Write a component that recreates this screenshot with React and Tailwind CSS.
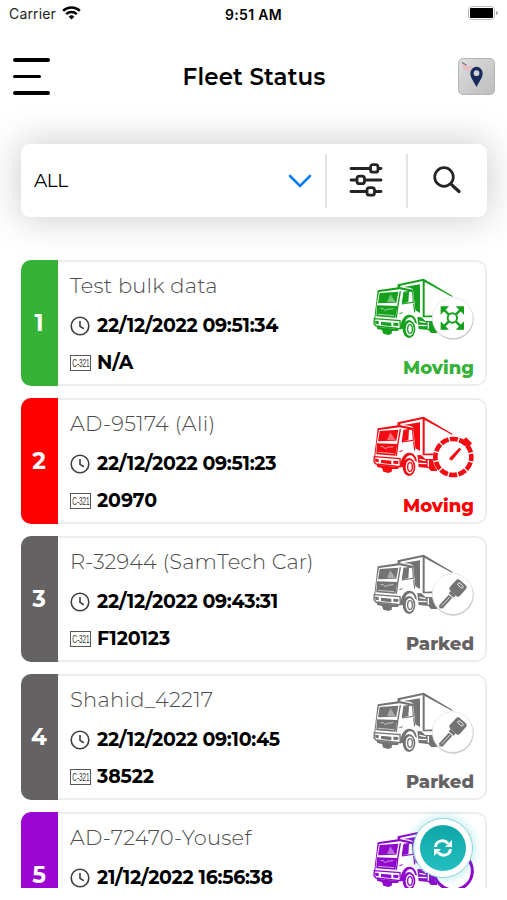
import React from "react";
import clsx from "clsx";

const vehicles = [
  {
    id: 1,
    name: "Test bulk data",
    nameClass: "tracking-[0.2px]",
    date: "22/12/2022 09:51:34",
    plate: "N/A",
    status: "Moving",
    badge: "arrows",
    bg: "bg-[#36b336]",
    text: "text-[#36b336]",
    truck: "text-[#14a01c]",
  },
  {
    id: 2,
    name: "AD-95174 (Ali)",
    nameClass: "tracking-[0.3px]",
    date: "22/12/2022 09:51:23",
    plate: "20970",
    status: "Moving",
    badge: "gauge",
    bg: "bg-[#fe0000]",
    text: "text-[#fe0000]",
    truck: "text-[#f50a12]",
  },
  {
    id: 3,
    name: "R-32944 (SamTech Car)",
    nameClass: "tracking-[0.1px]",
    date: "22/12/2022 09:43:31",
    plate: "F120123",
    status: "Parked",
    badge: "key",
    bg: "bg-[#646263]",
    text: "text-[#646263]",
    truck: "text-[#737373]",
  },
  {
    id: 4,
    name: "Shahid_42217",
    nameClass: "tracking-[0.3px]",
    date: "22/12/2022 09:10:45",
    plate: "38522",
    status: "Parked",
    badge: "key",
    bg: "bg-[#646263]",
    text: "text-[#646263]",
    truck: "text-[#737373]",
  },
  {
    id: 5,
    name: "AD-72470-Yousef",
    nameClass: "tracking-[0.25px]",
    date: "21/12/2022 16:56:38",
    badge: "ring",
    bg: "bg-[#9a05d2]",
    text: "text-[#9a05d2]",
    truck: "text-[#8f08cc]",
  },
];

const Badge = ({ type }) => {
  if (type === "gauge") {
    return (
      <g>
        <circle cx="310" cy="192" r="62" fill="#fff" />
        <circle
          cx="310"
          cy="192"
          r="54"
          fill="none"
          stroke="currentColor"
          strokeWidth="14"
          strokeDasharray="24.3 3.97"
          strokeDashoffset="12"
        />
        <path d="M333 147l15-14 18 18-12 14z" fill="currentColor" />
        <path d="M299 194l29-30 6 5-26 31c-6 4-12 0-9-6z" fill="currentColor" />
      </g>
    );
  }

  if (type === "ring") {
    return <circle cx="310" cy="192" r="57" fill="#fff" stroke="currentColor" strokeWidth="9" />;
  }

  return (
    <g>
      <circle cx="309" cy="192" r="62" fill="#c2c2c2" />
      <circle cx="308" cy="189" r="61" fill="#fff" stroke="#dedede" strokeWidth="2" />
      {type === "arrows" && (
        <g stroke="currentColor" strokeWidth="7" fill="none">
          <circle cx="307" cy="189" r="14" strokeWidth="6" />
          <path d="M296 178l-15-15M318 178l15-15M296 200l-15 15M318 200l15 15" />
          <g fill="currentColor" stroke="none">
            <path d="M272 154h25l-25 25zM342 154h-25l25 25zM272 224h25l-25-25zM342 224h-25l25-25z" />
          </g>
        </g>
      )}
      {type === "key" && (
        <g transform="translate(323 172) rotate(42)">
          <rect x="-20" y="-23" width="40" height="43" rx="9" fill="currentColor" />
          <path d="M-10 20h20v9H-10z" fill="currentColor" />
          <path d="M-7 32H7v43l-8 6-6-6z" fill="currentColor" />
          <path d="M0 35v38" stroke="#fff" strokeWidth="2" />
          <rect x="-9" y="-16" width="19" height="8" rx="4" fill="none" stroke="#fff" strokeWidth="2.5" />
        </g>
      )}
    </g>
  );
};

const Truck = ({ badge, className }) => (
  <svg viewBox="66 66 312 195" className={clsx("h-[65px] w-[104px]", className)}>
    {/* Cargo box */}
    <path d="M142 99l1-11 78-17 86 51v4l-83-45v101l31-1v6h-37V78l-67 14v6z" fill="currentColor" />
    <path d="M160 96l50-8v86l-14-8-7-63-9-5z" fill="currentColor" />
    {/* Cab */}
    <path d="M84 106l68-9 36 6 5 60 12 16-4 24-50 20-78-10-2-20z" fill="#fff" />
    <path d="M83 106l66-10 39 8 3 4-4 2-38-7-62 8-6 34-5 45-3-1z" fill="currentColor" />
    <path d="M89 114l56-4-6 33-55 2z" fill="currentColor" />
    <path d="M111 141l10-23 16 24z" fill="#fff" opacity="0.4" />
    <path d="M81 151l61 2-6 35-57-4z" fill="currentColor" />
    <path d="M92 160l9 2 5 5 6-4 18-2M84 178l48 4" fill="none" stroke="#fff" strokeWidth="2.2" opacity="0.85" />
    <path d="M149 108l4 1-7 42-5 37-4 2 5-41z" fill="currentColor" />
    <path d="M161 113l16-3-2 32-18 3z" fill="currentColor" />
    <path
      d="M157 146l5-34 21-4 5 3 2 31-34 5M191 146l3 26"
      fill="none"
      stroke="currentColor"
      strokeWidth="3.5"
    />
    <path d="M148 176l10-3" stroke="currentColor" strokeWidth="3" />
    {/* Bumper and lights */}
    <path d="M73 191l77 6 1 24-73-8-6-7z" fill="#fff" stroke="currentColor" strokeWidth="4" />
    <path
      d="M75 197l11 1v10l-10-2zM93 200l31 3v11l-31-4zM130 203l15 1v9l-15-1zM80 215l67 8-3 5-18 0-1 8-10 4-15-4-4-11-14-3z"
      fill="currentColor"
    />
    {/* Wheels */}
    <path
      d="M151 221c1-26 12-41 27-42 14 0 21 12 23 27l-6-3c-3-12-9-18-16-16-11 2-16 15-18 36z"
      fill="currentColor"
    />
    <ellipse cx="177" cy="222" rx="19" ry="27" fill="currentColor" />
    <ellipse cx="179" cy="222" rx="12" ry="20" fill="#fff" />
    <ellipse cx="180" cy="222" rx="7" ry="13" fill="none" stroke="currentColor" strokeWidth="4" />
    <path
      d="M202 186l12 1 12 11h31v33l-14 3-8-9-29-3zM236 224l25 1v9h-18z"
      fill="currentColor"
    />
    <path d="M208 199l19 4M205 211l25 1M235 201v20" stroke="#fff" strokeWidth="4" />
    <Badge type={badge} />
  </svg>
);

const ClockIcon = () => (
  <svg viewBox="0 0 20 20" className="-mt-[2px] h-5 w-5" fill="none" stroke="#3d3d3d" strokeWidth="1.6">
    <circle cx="10" cy="10" r="8.8" />
    <path d="M10 5v5.4l3.8 2.4" />
  </svg>
);

const PlateIcon = () => (
  <div className="-mt-[1px] flex h-4 w-[21px] items-center justify-center border-[1.5px] border-[#555]">
    <span className="scale-x-[0.58] font-['Liberation_Sans',sans-serif] text-[11px] leading-none font-normal tracking-normal whitespace-nowrap text-[#333]">
      C-321
    </span>
  </div>
);

const VehicleCard = ({ vehicle }) => (
  <div className="flex h-[126px] shrink-0 overflow-hidden rounded-[10px] bg-white">
    <div className={clsx("flex w-[37px] shrink-0 items-center justify-center pr-[1px] text-[23px] font-bold text-white", vehicle.bg)}>
      {vehicle.id}
    </div>
    <div className="flex flex-1 justify-between rounded-r-[10px] border-y-2 border-r-2 border-[#ececec] pr-[11px] pl-3">
      <div className="pt-[8px]">
        <div className={clsx("h-8 text-[21px] leading-8 font-light whitespace-nowrap text-[#4d4d4d]", vehicle.nameClass)}>
          {vehicle.name}
        </div>
        <div className="mt-[6px] flex h-[37px] items-center gap-[7px] text-[19px] font-bold tracking-[-0.3px] whitespace-nowrap">
          <ClockIcon />
          {vehicle.date}
        </div>
        {vehicle.plate && (
          <div className="flex h-[37px] items-center gap-[6px] text-[19px] font-bold tracking-[-0.1px]">
            <PlateIcon />
            {vehicle.plate}
          </div>
        )}
      </div>
      <div className="flex shrink-0 flex-col items-end pt-[15px]">
        <Truck badge={vehicle.badge} className={clsx("-mr-[2px]", vehicle.truck)} />
        {vehicle.status && (
          <div className={clsx("mt-[12px] text-[18px] leading-7 font-extrabold", vehicle.text)}>{vehicle.status}</div>
        )}
      </div>
    </div>
  </div>
);

const StatusBar = () => (
  <div className="flex h-7 items-center px-[9px] font-['Inter',sans-serif] text-[14px]">
    <div className="flex flex-1 items-center gap-[6px] text-[#222]">
      <span className="-mt-[1px] tracking-[0.15px]">Carrier</span>
      <svg viewBox="0 0 20 15" className="-mt-[2px] h-[14px] w-[19px]" fill="none" stroke="#000" strokeWidth="2.6">
        <path d="M1 5.2a13 13 0 0 1 18 0" />
        <path d="M4.3 8.8a8.2 8.2 0 0 1 11.4 0" />
        <path d="M7 11.4a4.3 4.3 0 0 1 6 0l-3 3z" fill="#000" stroke="none" />
      </svg>
    </div>
    <div className="text-[14px] font-semibold tracking-[0.3px]">9:51 AM</div>
    <div className="flex flex-1 items-center justify-end">
      <div className="-mt-[2px] flex h-[14px] w-[27px] rounded-[4px] border-[1.5px] border-[#bbb] p-[1px]">
        <div className="flex-1 rounded-[1px] bg-black" />
      </div>
      <div className="-mt-[2px] ml-[1px] h-1 w-[2px] rounded-r-full bg-[#aaa]" />
    </div>
  </div>
);

const App = () => {
  return (
    <div className="relative h-[900px] w-[507px] overflow-hidden bg-white font-['Montserrat','Inter',sans-serif] text-black">
      <StatusBar />

      {/* Header */}
      <div className="flex h-[98px] items-center justify-between pr-3 pl-[13px]">
        <button className="-mt-[1px] flex w-[37px] flex-col gap-[13px]">
          <span className="h-[3.5px] w-full rounded-full bg-black" />
          <span className="h-[3.5px] w-[28px] rounded-full bg-black" />
          <span className="h-[3.5px] w-full rounded-full bg-black" />
        </button>
        <h1 className="text-[23px] font-semibold tracking-[0.15px]">Fleet Status</h1>
        <button className="-mt-[1px] flex h-[37px] w-[37px] items-center justify-center rounded-[5px] border border-[#b5b5b5] bg-linear-to-br from-[#ddd] to-[#bdbdbd]">
          <svg viewBox="0 0 37 37" className="h-[37px] w-[37px]">
            <path d="M3 4l4 1 1 4 5-3 1 3-4 3-5-1z" fill="#e5bcc5" />
            <path d="M3 3.5l5 3" stroke="#555" strokeWidth="1" />
            <path d="M18.5 29.5C16 24.5 12 20 12 15a6.5 6.8 0 0 1 13 0c0 5-4 9.5-6.5 14.5z" fill="#192b5c" />
            <circle cx="18.5" cy="15" r="3" fill="#d2d2d2" />
          </svg>
        </button>
      </div>

      {/* Filter bar */}
      <div className="mt-[18px] mr-5 ml-[21px] flex h-[73px] items-center rounded-[9px] bg-white shadow-[0_0_36px_4px_rgba(0,0,0,0.18)]">
        <div className="flex flex-1 items-center justify-between px-[13px]">
          <span className="text-[18.5px] tracking-[-0.5px]">ALL</span>
          <svg viewBox="0 0 24 14" className="h-[14px] w-6" fill="none" stroke="#087cf5" strokeWidth="2.6" strokeLinecap="round">
            <path d="M2 2l10 10L22 2" />
          </svg>
        </div>
        <div className="flex h-[54px] w-[81px] items-center justify-center border-l-2 border-[#e2e2e2]">
          <svg viewBox="0 0 34 34" className="-mt-[1px] mr-[2px] h-[34px] w-[34px]" fill="none" stroke="#242424" strokeWidth="2.8" strokeLinecap="round">
            <path d="M2 5.5h18.5M30 5.5h2M2 17h5M16 17h16M2 28.5h15.5M26.5 28.5H32" />
            <rect x="21.5" y="1.7" width="7.5" height="7.5" rx="2.5" />
            <rect x="8" y="13.2" width="7.5" height="7.5" rx="2.5" />
            <rect x="18" y="24.7" width="7.5" height="7.5" rx="2.5" />
          </svg>
        </div>
        <div className="flex h-[54px] w-[81px] items-center justify-center border-l-2 border-[#e2e2e2]">
          <svg viewBox="0 0 28 28" className="-mt-[1px] mr-[2px] h-7 w-7" fill="none" stroke="#242424" strokeWidth="2.7" strokeLinecap="round">
            <circle cx="11" cy="11" r="9.3" />
            <path d="M18 18l1.500 1.500" />
            <path d="M20 20l6 5.500" strokeWidth="3.2" />
          </svg>
        </div>
      </div>

      {/* Vehicle list */}
      <div className="mt-[43px] flex h-[628px] flex-col gap-3 overflow-hidden pr-5 pl-[21px]">
        {vehicles.map((vehicle) => (
          <VehicleCard key={vehicle.id} vehicle={vehicle} />
        ))}
      </div>

      {/* Refresh button */}
      <button className="absolute top-[818px] left-[413px] flex h-[60px] w-[60px] items-center justify-center rounded-full border border-[#8cd5d6] bg-white shadow-[0_0_10px_2px_rgba(30,185,185,0.25)]">
        <span className="flex h-[46px] w-[46px] items-center justify-center rounded-full bg-linear-to-b from-[#10a6a8] to-[#22bec0]">
          <svg viewBox="0 0 20 20" className="h-5 w-5" fill="none" stroke="#fff" strokeWidth="3">
            <path d="M2.5 9C3 2.5 11 1 15 5.5M17.5 11C17 17.5 9 19 5 14.5" />
            <path d="M19 2v7h-7zM1 18v-7h7z" fill="#fff" stroke="none" />
          </svg>
        </span>
      </button>
    </div>
  );
};

export default App;
